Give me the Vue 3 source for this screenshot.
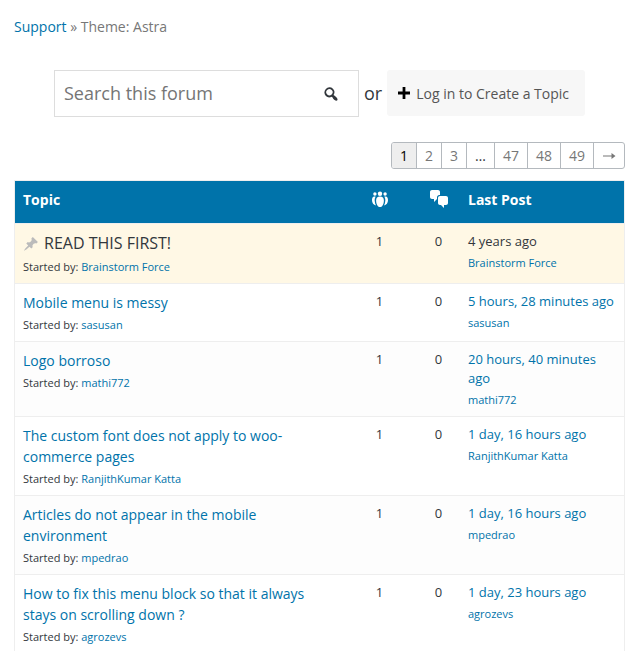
<script setup>
const pages = [
  { label: '1', current: true },
  { label: '2' },
  { label: '3' },
  { label: '…', gap: true },
  { label: '47' },
  { label: '48' },
  { label: '49' },
]

const topics = [
  { title: 'READ THIS FIRST!', author: 'Brainstorm Force', last: '4 years ago', sticky: true },
  { title: 'Mobile menu is messy', author: 'sasusan', last: '5 hours, 28 minutes ago' },
  { title: 'Logo borroso', author: 'mathi772', last: '20 hours, 40 minutes ago' },
  { title: 'The custom font does not apply to woo-commerce pages', author: 'RanjithKumar Katta', last: '1 day, 16 hours ago' },
  { title: 'Articles do not appear in the mobile environment', author: 'mpedrao', last: '1 day, 16 hours ago' },
  { title: 'How to fix this menu block so that it always stays on scrolling down ?', author: 'agrozevs', last: '1 day, 23 hours ago' },
]
</script>

<template>
  <main class="forum">
    <nav class="breadcrumb"><a href="#">Support</a> » Theme: Astra</nav>

    <div class="actions">
      <form class="search" @submit.prevent>
        <input type="search" placeholder="Search this forum" aria-label="Search this forum" />
        <button type="submit" aria-label="Search">
          <svg viewBox="0 0 20 20" width="18" height="18"><path d="M12.14 4.18a5.504 5.504 0 0 1 .72 6.89c.12.1.22.21.36.31.2.16.47.36.81.59.34.24.56.39.66.47.42.31.73.57.94.78.32.32.6.65.84 1 .25.35.44.69.59 1.04.14.35.21.68.18 1-.02.32-.14.59-.36.81s-.49.34-.81.36c-.31.02-.65-.04-.99-.19-.35-.14-.7-.34-1.04-.59-.35-.24-.68-.52-1-.84-.21-.21-.47-.52-.77-.93-.1-.13-.25-.35-.47-.66-.22-.32-.4-.57-.56-.78-.16-.2-.29-.35-.44-.5a5.503 5.503 0 0 1-6.53-.8c-2.15-2.15-2.15-5.64 0-7.78a5.49 5.49 0 0 1 7.87-.18zm-1.41 6.36a3.513 3.513 0 0 0 0-4.95 3.513 3.513 0 0 0-4.95 0 3.513 3.513 0 0 0 0 4.95 3.513 3.513 0 0 0 4.95 0z" /></svg>
        </button>
      </form>
      <span class="or">or</span>
      <a class="login" href="#">
        <svg viewBox="4 2 13 13" width="12" height="12"><path d="M17 7v3h-5v5H9v-5H4V7h5V2h3v5h5z" /></svg>
        Log in to Create a Topic
      </a>
    </div>

    <nav class="pagination" aria-label="Pages">
      <template v-for="p in pages" :key="p.label">
        <span v-if="p.current || p.gap" :class="{ current: p.current }">{{ p.label }}</span>
        <a v-else href="#">{{ p.label }}</a>
      </template>
      <a class="next" href="#" aria-label="Next page">
        <svg viewBox="0 0 14 8" width="14" height="8"><path d="M1 3.500h8.500V1L13.500 4 9.500 7V4.500H1z" /></svg>
      </a>
    </nav>

    <table class="topics">
      <colgroup>
        <col />
        <col class="col-count" />
        <col class="col-count" />
        <col class="col-last" />
      </colgroup>
      <thead>
        <tr>
          <th scope="col">Topic</th>
          <th scope="col" class="count" aria-label="Voices">
            <svg viewBox="0 0 20 20" width="20" height="20">
              <circle cx="10" cy="4.800" r="2.200" />
              <circle cx="4.900" cy="5" r="1.700" />
              <circle cx="15.100" cy="5" r="1.700" />
              <path d="M10 7.600c2.500 0 3.900 1.600 3.900 4 0 2.400-.8 4.300-1.700 5.400-.7 1.300-3.700 1.300-4.400 0-.9-1.100-1.700-3-1.700-5.400 0-2.400 1.400-4 3.900-4z" />
              <path d="M4.300 7.500c.6 0 1 .1 1.400.3-.8 1.100-1.100 2.400-1 4 .1 1.700.5 3.200 1.300 4.600-2.500-.3-4-2.500-4-5.100 0-2.200.8-3.800 2.300-3.800z" />
              <path d="M15.700 7.500c-.6 0-1 .1-1.400.3.8 1.100 1.100 2.400 1 4-.1 1.700-.5 3.200-1.300 4.600 2.500-.3 4-2.500 4-5.100 0-2.200-.8-3.800-2.300-3.800z" />
            </svg>
          </th>
          <th scope="col" class="count" aria-label="Replies">
            <svg viewBox="0 0 20 20" width="20" height="20"><path d="M11 6h-.82C9.070 6 8 7.200 8 8.160V10l-3 3v-3H3c-1.100 0-2-.9-2-2V3c0-1.100.9-2 2-2h6c1.100 0 2 .9 2 2v3zm0 1h6c1.100 0 2 .9 2 2v5c0 1.100-.9 2-2 2h-2v3l-3-3h-1c-1.100 0-2-.9-2-2V9c0-1.100.9-2 2-2z" /></svg>
          </th>
          <th scope="col" class="last">Last Post</th>
        </tr>
      </thead>
      <tbody>
        <tr v-for="t in topics" :key="t.title" :class="{ sticky: t.sticky }">
          <td class="topic">
            <div class="title">
              <template v-if="t.sticky">
                <svg viewBox="0 0 20 20" width="16" height="16"><path d="M10.440 3.020l1.820-1.820 6.360 6.350-1.830 1.820c-1.050-.68-2.480-.57-3.410.36l-.75.75c-.92.93-1.040 2.350-.35 3.410l-1.830 1.820-2.410-2.410-2.800 2.790c-.42.42-3.380 2.710-3.800 2.290s1.860-3.390 2.280-3.810l2.790-2.790L4.100 9.360l1.830-1.820c1.050.69 2.480.57 3.400-.36l.75-.75c.93-.92 1.050-2.350.36-3.410z" /></svg>
                <span>{{ t.title }}</span>
              </template>
              <a v-else href="#">{{ t.title }}</a>
            </div>
            <div class="meta">Started by: <a href="#">{{ t.author }}</a></div>
          </td>
          <td class="count">1</td>
          <td class="count">0</td>
          <td class="last">
            <div class="freshness">
              <span v-if="t.sticky">{{ t.last }}</span>
              <a v-else href="#">{{ t.last }}</a>
            </div>
            <div class="meta"><a href="#">{{ t.author }}</a></div>
          </td>
        </tr>
      </tbody>
    </table>
  </main>
</template>

<style>
body {
  margin: 0;
  background: #fff;
  overflow: hidden;
}
</style>

<style scoped>
.forum {
  padding: 16px 11px 0 14px;
  font-family: "Open Sans", sans-serif;
  font-size: 14px;
  color: #32373c;
}
a {
  color: #0073aa;
  text-decoration: none;
}
svg {
  display: block;
  flex: none;
  fill: currentColor;
}
.breadcrumb {
  line-height: 22px;
  color: #777;
}
.actions {
  display: flex;
  align-items: flex-start;
  margin: 32px 40px 0;
}
.search {
  flex: 1;
  display: flex;
  align-items: center;
  box-sizing: border-box;
  height: 47px;
  border: 1px solid #ddd;
  background: #fff;
}
.search input {
  flex: 1;
  min-width: 0;
  padding: 0 9px 2px;
  border: 0;
  outline: 0;
  background: none;
  font: 18px "Open Sans", sans-serif;
  color: #32373c;
}
.search input::placeholder {
  color: #757575;
  opacity: 1;
}
.search button {
  padding: 0;
  margin-right: 18px;
  border: 0;
  background: none;
  color: #32373c;
}
.or {
  margin: 0 5px;
  font-size: 18px;
  line-height: 46px;
}
.login {
  display: flex;
  align-items: center;
  gap: 6px;
  height: 46px;
  padding: 0 16px 0 11px;
  border-radius: 3px;
  background: #f7f7f7;
  color: #555;
}
.login svg {
  color: #000;
}
.pagination {
  display: flex;
  width: max-content;
  margin: 25px 0 0 auto;
  border: 1px solid #b4b9be;
  border-radius: 3px;
  line-height: 25px;
  overflow: hidden;
}
.pagination > * {
  padding: 0 8px;
}
.pagination > * + * {
  border-left: 1px solid #b4b9be;
}
.pagination a {
  color: #777;
}
.pagination .next {
  display: flex;
  align-items: center;
}
.pagination .current {
  background: #eee;
  color: #000;
}
.topics {
  width: 100%;
  margin-top: 11px;
  table-layout: fixed;
  border-collapse: separate;
  border-spacing: 0;
  border: 1px solid #eee;
}
.col-count {
  width: 59px;
}
.col-last {
  width: 156px;
}
th,
td {
  padding: 8px;
  vertical-align: top;
  text-align: left;
}
th {
  height: 22px;
  padding-bottom: 12px;
  background: #0073aa;
  color: #fff;
  line-height: 22px;
}
td {
  border-top: 1px solid #eee;
}
td.topic {
  padding-right: 24px;
}
tbody tr:nth-child(odd) {
  background: #fdfdfd;
}
tbody .sticky.sticky {
  background: #fff8e5;
}
.count {
  text-align: center;
}
td.count {
  font-size: 13px;
  line-height: 19px;
}
.count svg {
  margin: 0 auto;
}
th.last,
td.last {
  padding-left: 0;
  padding-right: 7px;
}
.title {
  font-size: 14px;
  line-height: 21px;
}
.sticky .title {
  display: flex;
  align-items: center;
  gap: 5px;
  font-size: 16px;
  line-height: 23px;
}
.title svg {
  color: #bbb;
}
.freshness {
  font-size: 13px;
  line-height: 19px;
}
.meta {
  margin-top: 4px;
  font-size: 11px;
  line-height: 16px;
}
</style>
